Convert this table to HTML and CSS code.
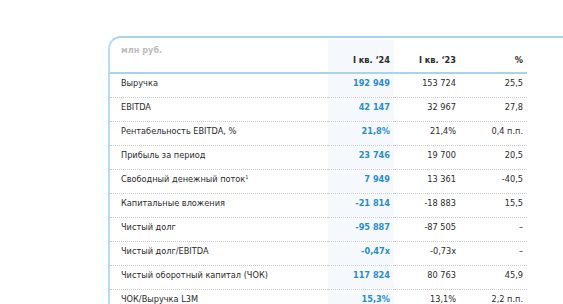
FILE: index.html
```html
<!DOCTYPE html>
<html lang="ru">
<head>
<meta charset="utf-8">
<link rel="stylesheet" href="styles.css">
</head>
<body>
<div class="card">
  <table class="fin">
    <colgroup>
      <col class="c-label"><col class="c-cur"><col class="c-prev"><col class="c-pct">
    </colgroup>
    <thead>
      <tr>
        <th class="unit">млн руб.</th>
        <th class="num cur">I кв. ‘24</th>
        <th class="num">I кв. ‘23</th>
        <th class="num">%</th>
      </tr>
    </thead>
    <tbody>
      <tr><td>Выручка</td><td class="num cur">192 949</td><td class="num">153 724</td><td class="num">25,5</td></tr>
      <tr><td>EBITDA</td><td class="num cur">42 147</td><td class="num">32 967</td><td class="num">27,8</td></tr>
      <tr><td>Рентабельность EBITDA, %</td><td class="num cur">21,8%</td><td class="num">21,4%</td><td class="num">0,4 п.п.</td></tr>
      <tr><td>Прибыль за период</td><td class="num cur">23 746</td><td class="num">19 700</td><td class="num">20,5</td></tr>
      <tr><td>Свободный денежный поток<sup>1</sup></td><td class="num cur">7 949</td><td class="num">13 361</td><td class="num">-40,5</td></tr>
      <tr><td>Капитальные вложения</td><td class="num cur">-21 814</td><td class="num">-18 883</td><td class="num">15,5</td></tr>
      <tr><td>Чистый долг</td><td class="num cur">-95 887</td><td class="num">-87 505</td><td class="num">–</td></tr>
      <tr><td>Чистый долг/EBITDA</td><td class="num cur">-0,47x</td><td class="num">-0,73x</td><td class="num">–</td></tr>
      <tr><td>Чистый оборотный капитал (ЧОК)</td><td class="num cur">117 824</td><td class="num">80 763</td><td class="num">45,9</td></tr>
      <tr><td>ЧОК/Выручка L3M</td><td class="num cur">15,3%</td><td class="num">13,1%</td><td class="num">2,2 п.п.</td></tr>
    </tbody>
  </table>
</div>
</body>
</html>
```
FILE: styles.css
```css
html, body {
  margin: 0;
  padding: 0;
  background: #ffffff;
  overflow: hidden;
}
body {
  font-family: "DejaVu Sans", Verdana, sans-serif;
  font-size: 8.2px;
  color: #2b2b2b;
}
.card {
  margin: 36px 0 0 108px;
  border-top: 2px solid #a8d4ea;
  border-left: 2px solid #b9dcee;
  border-top-left-radius: 13px;
  padding-top: 2px;
}
.fin {
  width: 417px;
  border-collapse: collapse;
  table-layout: fixed;
}
.c-label { width: 218px; }
.c-cur { width: 66px; }
.c-prev { width: 66px; }
.c-pct { width: 67px; }

.fin th {
  height: 33px;
  padding: 0 4px 7px 0;
  box-sizing: border-box;
  vertical-align: bottom;
  font-weight: bold;
  line-height: 10px;
  color: #2b2b2b;
  border-bottom: 2px solid #a8d4ea;
}
.fin th.unit {
  vertical-align: top;
  text-align: left;
  padding: 5px 0 0 11px;
  color: #bdbdbd;
}
.fin td {
  padding: 4px 4px 9px 0;
  line-height: 10px;
  border-bottom: 1px dotted #cfcfcf;
  white-space: nowrap;
}
.fin td:first-child {
  padding-left: 11px;
}
.num { text-align: right; }
.cur { background: #f5f8fc; padding-right: 3px; }
td.cur { color: #2a8ccf; font-weight: bold; }
sup {
  font-size: 5px;
  line-height: 0;
  vertical-align: 3px;
}
```
